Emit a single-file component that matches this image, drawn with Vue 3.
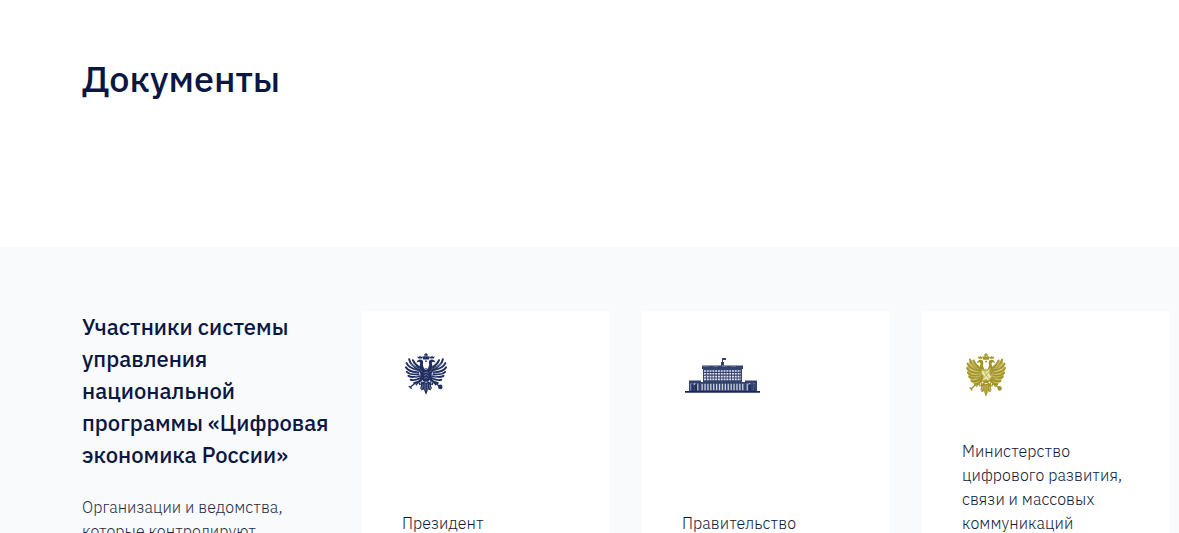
<template>
  <main class="page">
    <section class="documents">
      <h1 class="documents__title">Документы</h1>
    </section>

    <section class="members">
      <div class="members__intro">
        <h2 class="members__title">
          <span v-for="line in titleLines" :key="line" class="line">{{ line }}</span>
        </h2>
        <p class="members__text">
          <span v-for="line in introLines" :key="line" class="line">{{ line }}</span>
        </p>
      </div>

      <article v-for="card in cards" :key="card.icon" class="card">
        <svg v-if="card.icon === 'government'" class="card__building" viewBox="0 0 76 38" aria-hidden="true">
          <g fill="#34426f">
            <path d="M37 1h4v2h-3v2h-1zM36 5h3v4h-3zM17 8.5h41V12H17z" />
            <path d="M18 12h39v14H18z" />
            <path d="M4 23.5h12V34H4zM60 23.5h12V34H60zM15 25h46v9H15z" />
            <path d="M0 34h75v1.7H0z" fill="#17265c" />
          </g>
          <path d="M19 14h37M19 16.8h37M19 19.6h37M19 22.4h37" stroke="#e3e6ef" stroke-width="1.6" stroke-dasharray="1.9 .9" fill="none" />
          <path d="M18 9h6m4 0h5m4 0h5m4 0h5" stroke="#8790af" fill="none" />
          <path d="M16.5 30h43.5" stroke="#cdd2e0" stroke-width="6.5" stroke-dasharray="1.3 1.6" fill="none" />
          <path d="M5.5 30h1.2m5.5 0h1.2m48.2 0h1.2m5.5 0h1.2" stroke="#c0c7d9" stroke-width="7" fill="none" />
          <path d="M8.5 27h2m53 0h2" stroke="#9ba6c3" stroke-width="2" />
          <path d="M7 27v7m4-7v7m54-7v7m4-7v7" stroke="#17265c" stroke-width="1.3" />
        </svg>

        <svg v-else :class="['card__emblem', `card__emblem--${card.icon}`]" viewBox="0 0 132 132" preserveAspectRatio="none" aria-hidden="true">
          <g v-for="side in sides" :key="side" :transform="side">
            <path v-if="card.icon === 'ministry'" class="plumage" d="M46 42L25 22L12 21L3 44L8 70L18 84L30 94L53 84Z" />
            <path class="wing" d="M40 47Q17 38 13 19M41 52Q13 48 5 31M42 59Q13 59 3 44M43 65Q16 68 6 58M45 71Q22 77 11 70M48 77Q29 86 18 82M51 82Q39 92 29 92M44 43Q30 35 25 22M39 42L51 61V82" />
            <path class="fill" d="M66 54L59 45Q54 39 57 29Q57 20 48 20Q39 20 36 29L44 27Q50 29 47 35Q42 46 51 55L63 64ZM42 17L38 10L44 12L47 8L50 12L55 10L53 17Z" />
            <path class="detail" d="M52 82L42 89L34 99M43 88L47 98M51 87L51 99M57 88L49 110" />
            <path class="shade" d="M17 33l25 15M12 47l29 9M16 62h27M26 77l20-10" />
          </g>
          <path class="fill" d="M50 58L66 51L82 58L81 76Q78 87 66 91Q54 87 51 76ZM57 88L50 115L59 112L66 128L73 112L82 115L75 88Z" />
          <path class="fill" d="M57 20L54 12L61 9L64 12V8H60V4H64V0H68V4H72V8H68V12L71 9L78 12L75 20Z" />
          <path class="detail" d="M35 90L16 106M12 101l9 9M94 91L109 103M63 25h6M64 48h4" />
          <circle class="fill" cx="111" cy="104" r="7" />
          <path class="shade" d="M59 62l7-4 8 4M60 70l7-4 7 5M60 78l7-3 5 4M57 97l-3 12M63 93v23M70 93v23M76 98l3 11" />
          <path v-if="card.icon === 'ministry'" class="shield" d="M54 48L66 54L79 46L77 60L84 70L73 81L66 77L55 82L58 68L51 59ZM59 54L75 74M77 54L58 74" />
        </svg>

        <p class="card__name">
          <span v-for="line in card.lines" :key="line" class="line">{{ line }}</span>
        </p>
      </article>
    </section>
  </main>
</template>

<script setup>
const titleLines = ['Участники системы', 'управления', 'национальной', 'программы «Цифровая', 'экономика России»']
const introLines = ['Организации и ведомства,', 'которые контролируют']

// The second half of the eagle is the first one mirrored.
const sides = ['translate(0 0)', 'translate(132 0) scale(-1 1)']

const cards = [
  { icon: 'president', lines: ['Президент'] },
  { icon: 'government', lines: ['Правительство'] },
  { icon: 'ministry', lines: ['Министерство', 'цифрового развития,', 'связи и массовых', 'коммуникаций'] },
]
</script>

<style>
body {
  overflow: hidden;
}
</style>

<style scoped>
.page {
  height: 533px;
  overflow: hidden;
  display: flex;
  flex-direction: column;
  background: #fff;
  color: #0b1742;
  font-family: 'IBM Plex Sans', Roboto, 'Noto Sans', sans-serif;
}

.documents {
  box-sizing: border-box;
  height: 247px;
  flex: none;
  padding: 55px 82px;
}

.documents__title {
  margin: 0;
  font-size: 36px;
  line-height: 48px;
  font-weight: 500;
}

.members {
  box-sizing: border-box;
  flex: 1;
  display: grid;
  grid-template-columns: 248px 248px 248px 248px;
  column-gap: 32px;
  padding: 64px 0 0 82px;
  background: #f8fafc;
}

.members__title {
  margin: 0;
  font-size: 22px;
  line-height: 32px;
  font-weight: 500;
}

.members__text {
  margin: 24px 0 0;
  font-size: 16px;
  line-height: 24px;
  font-weight: 300;
  letter-spacing: 0.06px;
  color: #1f2b45;
}

.line {
  display: block;
  white-space: nowrap;
}

.card {
  box-sizing: border-box;
  height: 264px;
  padding: 40px;
  display: flex;
  flex-direction: column;
  justify-content: space-between;
  background: #fff;
}

.card__name {
  margin: 0;
  font-size: 16px;
  line-height: 24px;
  font-weight: 300;
  letter-spacing: 0.06px;
  color: #0f1a38;
}

.card__emblem {
  width: 42px;
  height: 43px;
  margin: 2px 0 0 3px;
  color: #202e60;
}

.card__emblem--ministry {
  width: 40px;
  height: 45px;
  margin-left: 4px;
  color: #a3942a;
}

.card__building {
  width: 76px;
  height: 38px;
  margin: 6px 0 0 3px;
}

.plumage {
  fill: #cfc46a;
}

.wing {
  fill: none;
  stroke: currentColor;
  stroke-width: 6;
  stroke-linecap: round;
}

.fill {
  fill: currentColor;
}

.detail {
  fill: none;
  stroke: currentColor;
  stroke-width: 4;
}

.shade {
  fill: none;
  stroke: #fff;
  stroke-width: 2;
  opacity: 0.5;
}

.shield {
  fill: #eee8b9;
  stroke: #c5b957;
  stroke-width: 3;
}
</style>
